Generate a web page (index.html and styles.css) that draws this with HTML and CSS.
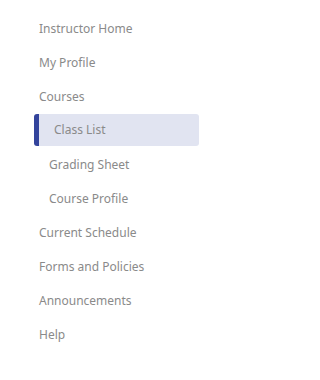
FILE: index.html
```html
<!DOCTYPE html>
<html>
<head>
<meta charset="utf-8">
<link rel="stylesheet" href="styles.css">
</head>
<body>
<nav class="sidebar">
  <a class="item">Instructor Home</a>
  <a class="item">My Profile</a>
  <a class="item">Courses</a>
  <a class="item sub active">Class List</a>
  <a class="item sub">Grading Sheet</a>
  <a class="item sub">Course Profile</a>
  <a class="item">Current Schedule</a>
  <a class="item">Forms and Policies</a>
  <a class="item">Announcements</a>
  <a class="item">Help</a>
</nav>
</body>
</html>
```
FILE: styles.css
```css
html, body {
  margin: 0;
  padding: 0;
  background: #ffffff;
}
.sidebar {
  display: flex;
  flex-direction: column;
  width: 165px;
  padding: 12px 0 0 34px;
  font-family: "Noto Sans", sans-serif;
  font-size: 12px;
  color: #8a8a8a;
}
.item {
  display: block;
  height: 34px;
  line-height: 34px;
  padding-left: 5px;
  white-space: nowrap;
}
.item.sub {
  padding-left: 15px;
}
.item.active {
  height: 32px;
  line-height: 32px;
  margin-bottom: 2px;
  padding-left: 15px;
  background: #e1e4f1;
  border-left: 5px solid #33449c;
  border-radius: 3px;
}
```
